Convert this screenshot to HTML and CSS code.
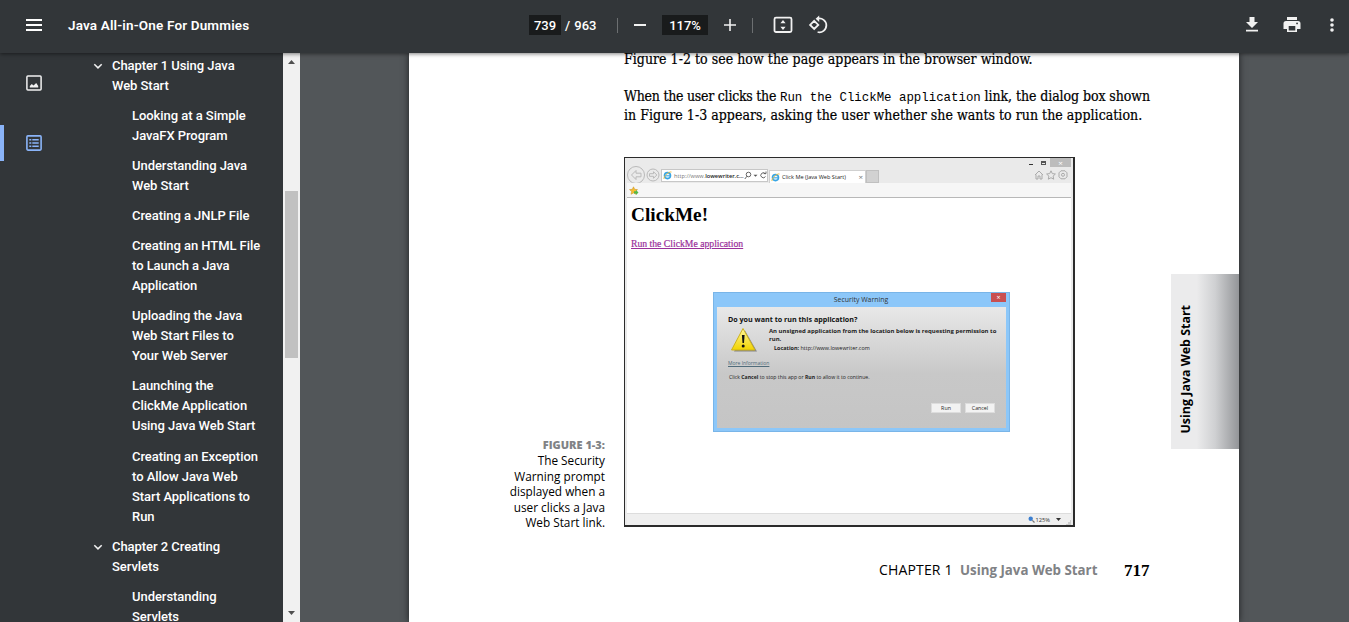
FILE: index.html
```html
<!DOCTYPE html>
<html lang="en">
<head>
<meta charset="utf-8">
<title>Java All-in-One For Dummies</title>
<link rel="stylesheet" href="styles.css">
</head>
<body>
<header class="toolbar">
  <div class="tb-left">
    <svg class="menu" width="24" height="24" viewBox="0 0 24 24"><path fill="#fff" d="M4 6h16v2H4zM4 11h16v2H4zM4 16h16v2H4z"/></svg>
    <span class="doc-title">Java All-in-One For Dummies</span>
  </div>
  <div class="tb-center">
    <span class="box page-no">739</span><span class="total">/ 963</span>
    <i class="sep s1"></i>
    <svg class="minus" width="20" height="20" viewBox="0 0 20 20"><path fill="#f1f1f1" d="M4 9h12v2H4z"/></svg>
    <span class="box zoom">117%</span>
    <svg class="plus" width="20" height="20" viewBox="0 0 20 20"><path fill="#f1f1f1" d="M4 9.2h5.2V4h1.6v5.2H16v1.6h-5.2V16H9.200v-5.200H4z"/></svg>
    <i class="sep s2"></i>
    <svg class="fit" width="20" height="20" viewBox="0 0 20 20"><rect x="1.500" y="2.700" width="17" height="14.300" rx="1.500" fill="none" stroke="#f1f1f1" stroke-width="1.800"/><path fill="#f1f1f1" d="M10 5l2.600 3.200H7.400zM10 15l2.600-3.200H7.400z"/></svg>
    <svg class="rotate" width="20" height="20" viewBox="0 0 20 20"><path fill="none" stroke="#f1f1f1" stroke-width="1.800" d="M6.200 5.800L10.300 9.900 6.200 14 2.100 9.900zM9.600 3.700a6.900 6.900 0 1 1 0 13.300"/><path fill="#f1f1f1" d="M11.200.5v6.400L7.600 3.700z"/></svg>
  </div>
  <div class="tb-right">
    <svg width="20" height="20" viewBox="0 0 20 20"><path fill="#f1f1f1" d="M7.500 2h5v5H16l-6 6-6-6h3.500zM4 14.700h12v1.700H4z"/></svg>
    <svg width="20" height="20" viewBox="0 0 20 20"><path fill="#f1f1f1" fill-rule="evenodd" d="M5 2h10v3H5zM4 6h12a2.500 2.500 0 0 1 2.500 2.500V14H15v3H5v-3H1.500V8.500A2.500 2.500 0 0 1 4 6zm2.700 5v4.400h6.600V11zM15 7.500a.9.9 0 1 0 .1 0z"/></svg>
    <svg width="20" height="20" viewBox="0 0 20 20" fill="#f1f1f1"><circle cx="10" cy="5" r="1.800"/><circle cx="10" cy="10" r="1.800"/><circle cx="10" cy="15" r="1.800"/></svg>
  </div>
</header>
<main class="main">
  <nav class="rail">
    <div class="rail-item"><svg width="16" height="16" viewBox="0 0 16 16"><rect x=".9" y=".9" width="14.200" height="14.200" rx="1" fill="none" stroke="#f1f1f1" stroke-width="1.500"/><path fill="#f1f1f1" d="M3.800 12.400V11L5.800 9l1.700 1.600L10.200 8l2 3v1.400z"/></svg></div>
    <div class="rail-item active"><svg width="16" height="16" viewBox="0 0 16 16"><rect x=".9" y=".9" width="14.200" height="14.200" rx="1" fill="none" stroke="#8ab4f8" stroke-width="1.600"/><path fill="#8ab4f8" d="M3.300 4h2v1.400h-2zM6.300 4h6.400v1.400H6.300zM3.300 7.300h2v1.400h-2zM6.300 7.300h6.400v1.400H6.300zM3.300 10.600h2V12h-2zM6.300 10.600h6.400V12H6.300z"/></svg></div>
  </nav>
  <div class="outline">
    <div class="chapter"><svg width="10" height="7" viewBox="0 0 10 7"><path d="M1.300 1.200L5 4.900l3.700-3.700" fill="none" stroke="#f1f1f1" stroke-width="1.500"/></svg>Chapter 1 Using Java<br>Web Start</div>
    <div class="topic">Looking at a Simple<br>JavaFX Program</div>
    <div class="topic">Understanding Java<br>Web Start</div>
    <div class="topic">Creating a JNLP File</div>
    <div class="topic">Creating an HTML File<br>to Launch a Java<br>Application</div>
    <div class="topic">Uploading the Java<br>Web Start Files to<br>Your Web Server</div>
    <div class="topic">Launching the<br>ClickMe Application<br>Using Java Web Start</div>
    <div class="topic">Creating an Exception<br>to Allow Java Web<br>Start Applications to<br>Run</div>
    <div class="chapter"><svg width="10" height="7" viewBox="0 0 10 7"><path d="M1.300 1.200L5 4.900l3.700-3.700" fill="none" stroke="#f1f1f1" stroke-width="1.500"/></svg>Chapter 2 Creating<br>Servlets</div>
    <div class="topic">Understanding<br>Servlets</div>
  </div>
  <div class="scrollbar">
    <svg width="7" height="4" viewBox="0 0 7 4"><path fill="#505050" d="M0 4L3.500 0 7 4z"/></svg>
    <div class="thumb"></div>
    <svg width="7" height="4" viewBox="0 0 7 4"><path fill="#505050" d="M0 0h7L3.500 4z"/></svg>
  </div>
  <section class="viewer">
    <article class="page">
      <div class="body-text">
        <div class="line l1">Figure 1-2 to see how the page appears in the browser window.</div>
        <div class="line l2"><span class="a">When the user clicks the</span><code>Run the ClickMe application</code><span class="b">link, the dialog box shown</span></div>
        <div class="line l3">in Figure 1-3 appears, asking the user whether she wants to run the application.</div>
      </div>
      <div class="figure">
        <div class="caption"><b>FIGURE 1-3:</b><br>The Security<br>Warning prompt<br>displayed when a<br>user clicks a Java<br>Web Start link.</div>
        <div class="browser">
          <div class="win-buttons"><i class="wmin"></i><i class="wmax"></i><i class="wclose">×</i></div>
          <div class="nav-row">
            <svg class="arrows" width="33" height="18" viewBox="0 0 33 18" fill="none" stroke="#b9b9b9"><circle cx="9" cy="9" r="8.500"/><path d="M4.500 9L9 4.500v2.700h5v3.600H9v2.700z"/><circle cx="26" cy="9" r="6"/><path d="M29.800 9l-3.300-3.300v2H22.500v2.600h4v2z"/></svg>
            <div class="address"><svg class="ie" width="9" height="9" viewBox="0 0 9 9"><circle cx="4.500" cy="4.600" r="3" fill="#eaf7ff" stroke="#38a5e4" stroke-width="1.600"/><path d="M2 4.800h5" stroke="#38a5e4"/><path d="M1 8C0 6 6 0 8.500 1" fill="none" stroke="#efbd38" stroke-width=".9"/></svg><span>http://www.<b>lowewriter.c...</b></span><svg class="search" width="24" height="9" viewBox="0 0 24 9" fill="none" stroke="#555" stroke-width=".9"><circle cx="4.500" cy="3.500" r="2.300"/><path d="M3 5.200L.8 8M21.300 2.700A2.500 2.500 0 1 0 21.500 5.500M19.500 2.600h2.500V.5"/><path d="M9.500 3.800h4l-2 2z" fill="#555" stroke="none"/></svg></div>
            <div class="tab"><svg class="ie" width="9" height="9" viewBox="0 0 9 9"><circle cx="4.500" cy="4.600" r="3" fill="#eaf7ff" stroke="#38a5e4" stroke-width="1.600"/><path d="M2 4.800h5" stroke="#38a5e4"/><path d="M1 8C0 6 6 0 8.500 1" fill="none" stroke="#efbd38" stroke-width=".9"/></svg><span>Click Me (Java Web Start)</span><em>×</em></div>
            <div class="newtab"></div>
            <svg class="tools" width="34" height="10" viewBox="0 0 34 10" fill="none" stroke="#aaa"><path d="M1 5l4-4 4 4M2 4.500V9h2V6h2v3h2V4.500M17 .8l1.300 2.800 3.100.4-2.300 2.100.6 3.100L17 7.700l-2.700 1.500.6-3.100L12.600 4l3.100-.4z"/><path d="M27 .8h4l2 2v4l-2 2h-4l-2-2v-4z"/><circle cx="29" cy="4.800" r="1.500"/></svg>
          </div>
          <div class="fav-bar"><svg width="10" height="10" viewBox="0 0 10 10"><path fill="#f5bd31" stroke="#c79022" stroke-width=".5" d="M4.500.8l1.200 2.500 2.800.3-2.100 1.900.6 2.800-2.500-1.400L2 8.300l.6-2.800L.5 3.600l2.800-.3z"/><path fill="#54b948" d="M5 5.200h2V4l2.500 2.500L7 9V7.600H5z"/></svg></div>
          <div class="content">
            <div class="h1">ClickMe!</div>
            <div class="link">Run the ClickMe application</div>
            <div class="dialog">
              <div class="dlg-title"><span>Security Warning</span><i>×</i></div>
              <div class="dlg-body">
                <div class="q">Do you want to run this application?</div>
                <div class="warn-row">
                  <svg width="28" height="26" viewBox="0 0 28 26"><defs><linearGradient id="y" x1="0" y1="0" x2="0" y2="1"><stop offset="0" stop-color="#fff59a"/><stop offset="1" stop-color="#f2d400"/></linearGradient></defs><path d="M15 3.500L27 24.500H4z" fill="#555" opacity=".6"/><path d="M13 1.500L25 23H1.500z" fill="url(#y)" stroke="#cdb21b" stroke-linejoin="round"/><path d="M11.900 8h2.700l-.6 8h-1.500z" fill="#111"/><circle cx="13.200" cy="19" r="1.500" fill="#111"/></svg>
                  <div class="warn-text"><b>An unsigned application from the location below is requesting permission to<br>run.</b><div class="loc"><b>Location:</b> <span>http://www.lowewriter.com</span></div></div>
                </div>
                <div class="more">More Information</div>
                <div class="hint">Click <b>Cancel</b> to stop this app or <b>Run</b> to allow it to continue.</div>
                <div class="btns"><span>Run</span><span>Cancel</span></div>
              </div>
            </div>
          </div>
          <div class="status"><svg width="7" height="7" viewBox="0 0 7 7"><circle cx="2.700" cy="2.700" r="2.200" fill="#3c7fd0"/><path d="M4.300 4.300L6.500 6.500" stroke="#777" stroke-width="1.200"/></svg><span>125%</span><svg width="5" height="3" viewBox="0 0 5 3"><path d="M0 0h5L2.500 3z" fill="#333"/></svg><svg class="grip" width="5" height="5" viewBox="0 0 5 5"><path d="M4 0h1v5H0V4h2V2h2z" fill="#ccc"/></svg></div>
        </div>
      </div>
      <footer class="foot"><span class="ch">CHAPTER 1</span><b>Using Java Web Start</b><span class="num">717</span></footer>
      <aside class="side-tab"><span>Using Java Web Start</span></aside>
    </article>
  </section>
</main>
</body>
</html>
```
FILE: styles.css
```css
* { box-sizing: border-box; }
body { margin: 0; width: 1349px; height: 622px; overflow: hidden; background: #525659; font-family: Roboto, sans-serif; display: flex; flex-direction: column; }
svg { display: block; flex: none; }
i, em { font-style: normal; }

.toolbar { position: relative; z-index: 2; flex: none; height: 53px; padding-bottom: 3px; background: #323639; color: #fff; display: grid; grid-template-columns: 529px 1fr auto; align-items: center; font-size: 13px; font-weight: 500; box-shadow: 0 1px 4px rgba(0,0,0,.5); }
.tb-left { display: flex; align-items: center; padding-left: 22px; }
.doc-title { margin-left: 22px; font-size: 13.500px; font-weight: 600; letter-spacing: .16px; }
.tb-center { display: flex; align-items: center; }
.box { background: #191b1c; height: 20px; line-height: 21px; text-align: center; }
.page-no { width: 32px; }
.total { margin-left: 4px; width: 52px; word-spacing: 1px; }
.sep { width: 1px; height: 15px; background: #6c6f71; }
.minus { margin-left: 12px; }
.zoom { margin-left: 12px; width: 46px; }
.plus { margin-left: 12px; }
.s2 { margin-left: 12px; }
.fit { margin-left: 20px; }
.rotate { margin-left: 15px; }
.tb-right { display: flex; gap: 20px; padding-right: 7px; }

.main { flex: 1; min-height: 0; display: grid; grid-template-columns: 68px 215px 17px 1fr; grid-template-rows: 100%; }
.rail { background: #323639; padding-top: 12px; display: flex; flex-direction: column; gap: 24px; }
.rail-item { height: 36px; display: flex; align-items: center; padding-left: 26px; }
.rail-item.active { border-left: 4px solid #8ab4f8; padding-left: 22px; }

.outline { background: #323639; color: #fff; font-size: 13px; font-weight: 500; letter-spacing: -.05px; line-height: 20.030px; padding-top: 3px; display: flex; flex-direction: column; gap: 10px; overflow: hidden; white-space: nowrap; }
.chapter { position: relative; padding-left: 44px; flex: none; }
.chapter svg { position: absolute; left: 25px; top: 7px; }
.topic { padding-left: 64px; flex: none; }

.scrollbar { background: #f1f1f1; display: flex; flex-direction: column; align-items: center; padding: 7px 0; }
.thumb { width: 13px; height: 167px; background: #c1c1c1; margin: 127px 0 auto; }

.viewer { padding-left: 109px; overflow: hidden; }
.page { position: relative; width: 830px; height: 569px; background: #fff; box-shadow: 0 0 7px rgba(0,0,0,.65); color: #000; }
.body-text { padding-left: 215px; height: 104px; overflow: hidden; font: 14px/19px "DejaVu Serif Condensed", "DejaVu Serif", serif; font-stretch: condensed; -webkit-text-stroke: .2px #000; }
.line { width: 526px; white-space: nowrap; }
.l1 { margin: -3px 0 18px; letter-spacing: .03px; }
.l2 { display: flex; justify-content: space-between; }
.l2 .a { letter-spacing: -.25px; }
.l2 .b { letter-spacing: -.08px; }
.l2 code { font: 12.400px/19px "Liberation Mono", monospace; padding-top: 2px; height: 19px; -webkit-text-stroke: 0; }
.l3 { letter-spacing: .03px; }

.figure { display: flex; height: 370px; }
.caption { width: 196px; margin-right: 19px; align-self: flex-end; margin-bottom: -4px; text-align: right; font: 11.800px/15.600px "Open Sans", sans-serif; }
.caption b { color: #808285; font-weight: 800; font-size: 11px; }

.browser { width: 451px; height: 370px; border: 2px solid #2b2b2b; border-width: 1px 2px 2px 1px; background: #eaeaea; padding: 0 2px; display: flex; flex-direction: column; font: 6px/8px "Open Sans", sans-serif; }
.win-buttons { height: 9px; display: flex; justify-content: flex-end; align-items: center; }
.wmin { width: 4px; height: 1px; background: #333; margin: 4px 8px 0 0; }
.wmax { width: 5px; height: 4px; border: 1px solid #555; border-top-width: 2px; margin-right: 4px; }
.wclose { width: 21px; height: 9px; background: #bcbcbc; color: #fff; text-align: center; font-size: 8px; line-height: 9px; }
.nav-row { height: 16px; display: flex; align-items: flex-end; }
.arrows { margin-bottom: -1px; }
.address { width: 107px; height: 13px; margin: 0 1px 1px 1px; border: 1px solid #c7c7c7; background: #fff; display: flex; align-items: center; color: #777; white-space: nowrap; }
.address span { margin-left: 2px; font-size: 5.700px; letter-spacing: -.02px; }
.address b { color: #222; font-weight: 600; }
.ie { margin-left: 1px; }
.search { margin-left: auto; }
.tab { width: 97px; height: 13px; background: #fff; border: 1px solid #d0d0d0; border-bottom: 0; display: flex; align-items: center; color: #222; white-space: nowrap; }
.tab span { margin-left: 2px; font-size: 5.600px; }
.tab em { margin-left: auto; margin-right: 2px; color: #777; font-size: 8px; }
.newtab { width: 13px; height: 13px; background: #d2d2d2; border: 1px solid #c0c0c0; }
.tools { margin: 0 3px 3px auto; }
.fav-bar { height: 15px; background: #f6f6f6; border-bottom: 1px solid #b8b8b8; padding: 3px 0 0 2px; }
.content { position: relative; flex: 1; background: #fff; padding: 5px 0 0 4px; font-family: "Liberation Serif", serif; }
.h1 { font-size: 19.300px; line-height: 24px; font-weight: 700; }
.link { margin-top: 10px; font-size: 9.700px; line-height: 13px; color: #9a2f9a; text-decoration: underline; -webkit-text-stroke: .2px #9a2f9a; }
.status { height: 12px; background: #efefef; border-top: 1px solid #ddd; display: flex; align-items: center; justify-content: flex-end; color: #333; font-size: 5.700px; }
.status span { margin: 0 6px 0 1px; }
.grip { margin: 5px 0 0 5px; }

.dialog { position: absolute; left: 86px; top: 94px; width: 297px; height: 140px; background: #8cc7f9; border: 1px solid #79b5e8; padding: 0 3px 3px; font-family: "Open Sans", sans-serif; color: #222; display: flex; flex-direction: column; }
.dlg-title { height: 14px; display: flex; justify-content: center; position: relative; font-size: 6.900px; line-height: 14px; color: #333; padding-right: 1px; }
.dlg-title i { position: absolute; right: 0; top: 0; width: 15px; height: 9px; background: #c94f50; color: #fff; text-align: center; font-size: 7px; line-height: 9px; }
.dlg-body { flex: 1; background: linear-gradient(#e8e8e8, #c8c8c8 55%, #c5c5c5); padding: 8px 13px 0 11px; white-space: nowrap; }
.q { font: 700 7.150px/9px "Open Sans", sans-serif; color: #111; }
.warn-row { display: flex; height: 29px; padding-top: 3px; }
.warn-row > svg { margin-left: 2px; }
.warn-text { margin-left: 11px; font: 5.980px/8px "Open Sans", sans-serif; }
.loc { margin: 1px 0 0 5px; font-size: 5.450px; }
.more { margin-top: 7px; font: 5px/7px "Open Sans", sans-serif; color: #506c7b; text-decoration: underline; }
.hint { margin: 6px 0 0 1px; font: 5.150px/8px "Open Sans", sans-serif; }
.btns { display: flex; justify-content: flex-end; gap: 4px; margin: 22px -2px 0 0; font: 5.300px/10px "Open Sans", sans-serif; }
.btns span { width: 30px; height: 10px; background: #f2f2f2; border: 1px solid #ddd; line-height: 8px; text-align: center; }

.foot { display: flex; align-items: center; height: 30px; margin-top: 28px; padding-left: 470px; font: 14px/20px "Open Sans", sans-serif; white-space: nowrap; }
.ch { width: 81px; letter-spacing: .15px; }
.foot b { width: 164px; color: #808285; font-size: 13.300px; }
.num { font: 700 17px/20px "Liberation Serif", serif; padding-top: 2px; }
.side-tab { position: absolute; right: 0; top: 221px; width: 68px; height: 175px; background: linear-gradient(90deg, #ebebec 38%, #cfd0d2 65%, #939598); padding-left: 5px; display: flex; align-items: flex-end; }
.side-tab span { writing-mode: vertical-rl; transform: rotate(180deg); font: 700 12.450px/20px "Open Sans", sans-serif; margin-bottom: 15px; }
```
